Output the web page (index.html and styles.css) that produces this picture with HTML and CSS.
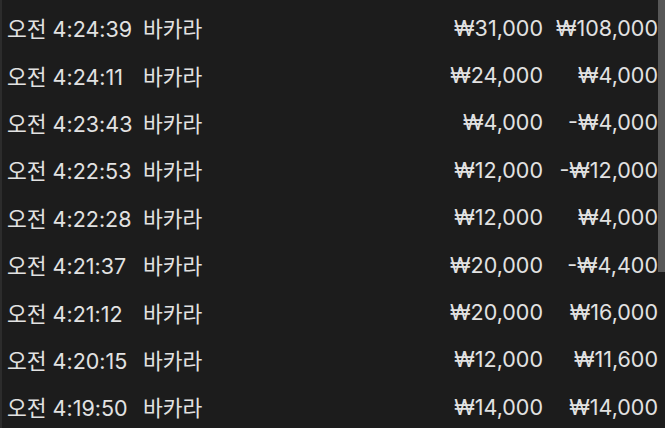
FILE: index.html
```html
<!DOCTYPE html>
<html lang="ko">
<head>
<meta charset="utf-8">
<link rel="stylesheet" href="styles.css">
</head>
<body>
<div class="list">
  <div class="row"><span class="time">오전 4:24:39</span><span class="game">바카라</span><span class="amt">₩31,000</span><span class="amt">₩108,000</span></div>
  <div class="row"><span class="time">오전 4:24:11</span><span class="game">바카라</span><span class="amt">₩24,000</span><span class="amt">₩4,000</span></div>
  <div class="row"><span class="time">오전 4:23:43</span><span class="game">바카라</span><span class="amt">₩4,000</span><span class="amt">-₩4,000</span></div>
  <div class="row"><span class="time">오전 4:22:53</span><span class="game">바카라</span><span class="amt">₩12,000</span><span class="amt">-₩12,000</span></div>
  <div class="row"><span class="time">오전 4:22:28</span><span class="game">바카라</span><span class="amt">₩12,000</span><span class="amt">₩4,000</span></div>
  <div class="row"><span class="time">오전 4:21:37</span><span class="game">바카라</span><span class="amt">₩20,000</span><span class="amt">-₩4,400</span></div>
  <div class="row"><span class="time">오전 4:21:12</span><span class="game">바카라</span><span class="amt">₩20,000</span><span class="amt">₩16,000</span></div>
  <div class="row"><span class="time">오전 4:20:15</span><span class="game">바카라</span><span class="amt">₩12,000</span><span class="amt">₩11,600</span></div>
  <div class="row"><span class="time">오전 4:19:50</span><span class="game">바카라</span><span class="amt">₩14,000</span><span class="amt">₩14,000</span></div>
</div>
<div class="scrollbar"></div>
</body>
</html>
```
FILE: styles.css
```css
html, body {
  margin: 0;
  padding: 0;
  background: #1c1c1c;
  width: 665px;
  height: 428px;
  overflow: hidden;
}
body {
  position: relative;
  font-family: "Inter", "Noto Sans CJK KR", sans-serif;
  font-size: 21.5px;
  color: #e2e2e2;
}
.list {
  border-left: 2px solid #2c2c2c;
  padding: 4px 7px 0 5px;
  height: 428px;
  box-sizing: border-box;
}
.row {
  display: grid;
  grid-template-columns: 136px 1fr 120px 115px;
  align-items: center;
  height: 47.4px;
  white-space: nowrap;
}
.amt {
  text-align: right;
}
.scrollbar {
  position: absolute;
  top: 0;
  right: 0;
  width: 7px;
  height: 272px;
  background: #575757;
}
```
